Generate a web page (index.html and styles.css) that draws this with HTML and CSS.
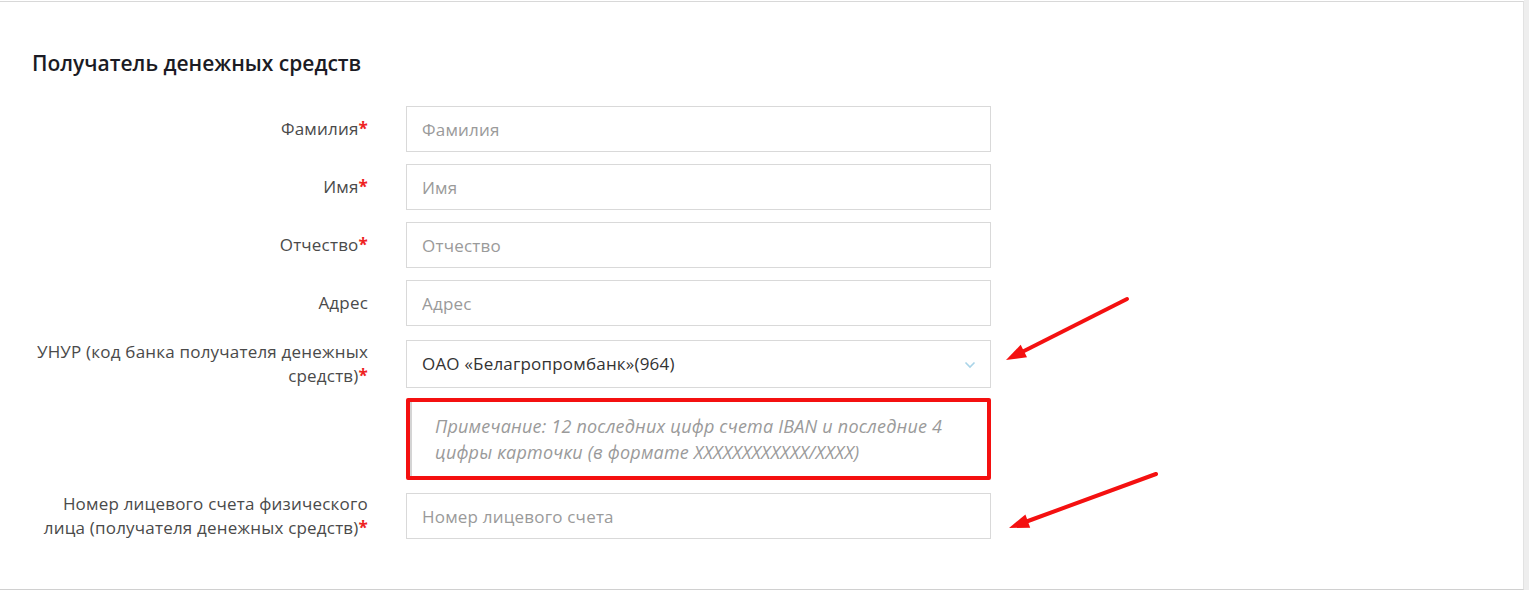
FILE: index.html
```html
<html>
<head>
	<meta charset="utf-8">
	<title>Получатель денежных средств</title>
	<link rel="stylesheet" href="styles.css">
</head>
<body>
	<section class="panel">
		<h2 class="panel-title">Получатель денежных средств</h2>
		<form class="recipient-form" action="#">
			<div class="row">
				<label class="row-label" for="last_name">Фамилия<span class="req">*</span></label>
				<input class="field" type="text" id="last_name" placeholder="Фамилия">
			</div>
			<div class="row">
				<label class="row-label" for="first_name">Имя<span class="req">*</span></label>
				<input class="field" type="text" id="first_name" placeholder="Имя">
			</div>
			<div class="row">
				<label class="row-label" for="middle_name">Отчество<span class="req">*</span></label>
				<input class="field" type="text" id="middle_name" placeholder="Отчество">
			</div>
			<div class="row">
				<label class="row-label" for="address">Адрес</label>
				<input class="field" type="text" id="address" placeholder="Адрес">
			</div>
			<div class="row row-select">
				<label class="row-label" for="bank">УНУР (код банка получателя денежных средств)<span class="req">*</span></label>
				<div class="field select">
					<span class="select-value">ОАО «Белагропромбанк»(964)</span>
					<svg class="chevron" width="12" height="8" viewBox="0 0 12 8"><path d="M1.5 1.5 L6 6 L10.5 1.5" fill="none" stroke="#a9d4e8" stroke-width="1.6"/></svg>
				</div>
			</div>
			<div class="row">
				<div class="row-label"></div>
				<div class="field note">
					<p>Примечание: 12 последних цифр счета IBAN и последние 4 цифры карточки (в формате XXXXXXXXXXXX/XXXX)</p>
				</div>
			</div>
			<div class="row">
				<label class="row-label" for="account">Номер лицевого счета физического лица (получателя денежных средств)<span class="req">*</span></label>
				<input class="field" type="text" id="account" placeholder="Номер лицевого счета">
			</div>
		</form>

		<!-- annotation arrows -->
		<svg class="marks" width="1524" height="590" viewBox="0 0 1524 590">
			<line x1="1127" y1="298" x2="1024" y2="350" stroke="#f41010" stroke-width="4" stroke-linecap="round"/>
			<polygon points="1006,359 1027,356.3 1020.7,343.8" fill="#f41010"/>
			<line x1="1156" y1="473" x2="1028" y2="520" stroke="#f41010" stroke-width="4" stroke-linecap="round"/>
			<polygon points="1009,527 1030.2,526.7 1025.4,513.5" fill="#f41010"/>
		</svg>
	</section>
</body>
</html>
```

FILE: styles.css
```css
*, *:before, *:after {
	box-sizing: border-box;
}
html {
	background: #eeeeee;
}
body {
	font-family: "Open Sans", "Noto Sans", Arial, sans-serif;
	font-size: 17px;
	line-height: 24px;
	letter-spacing: 0.2px;
	color: #444;
	margin: 0;
	padding-top: 1px;
	width: 1524px;
	background: #fff;
}
.panel {
	position: relative;
	height: 589px;
	padding: 48px 0 0 32px;
	background: #fff;
	border-top: 1px solid #d8d8d8;
	border-bottom: 1px solid #d0d0d0;
	border-right: 1px solid #e2e2e2;
}
.panel-title {
	margin: 0 0 30px;
	font-size: 21px;
	line-height: 26px;
	font-weight: 600;
	letter-spacing: 0;
	color: #1b1b24;
}
.row {
	display: flex;
	align-items: center;
	margin-bottom: 12px;
}
.row-select {
	margin-top: 14px;
	margin-bottom: 10px;
}
.row-label {
	width: 336px;
	margin-right: 38px;
	text-align: right;
	color: #4a4a4a;
}
.req {
	color: #ee2222;
	font-weight: 700;
}
.field {
	width: 585px;
	height: 46px;
	padding: 0 15px;
	font-family: inherit;
	font-size: 17px;
	letter-spacing: 0.2px;
	color: #333;
	border: 1px solid #d9d9d9;
	background: #fff;
}
.field::placeholder {
	color: #9a9a9a;
}
.field:focus {
	outline: 0;
	border-color: #aaa;
}
.select {
	display: flex;
	align-items: center;
	justify-content: space-between;
	height: 48px;
	padding: 0 14px 0 15px;
}
.select-value {
	color: #333;
}
.chevron {
	margin-top: 2px;
}
.note {
	height: 82px;
	padding: 0 20px 0 25px;
	border: 4px solid #f41010;
	border-radius: 2px;
	box-shadow: inset 2px 0 0 #d4d4d4;
	display: flex;
	align-items: center;
}
.note p {
	margin: 0;
	font-size: 18px;
	line-height: 26px;
	font-style: italic;
	color: #9a9a9a;
}
.marks {
	position: absolute;
	left: 0;
	top: -1px;
	pointer-events: none;
}
```
